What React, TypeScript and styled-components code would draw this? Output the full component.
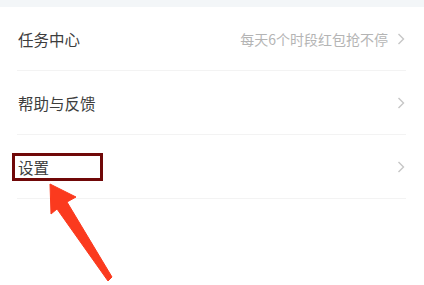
import React from 'react'
import styled, { createGlobalStyle } from 'styled-components'

const GlobalStyle = createGlobalStyle`
    html, body {
        margin: 0;
        padding: 0;
        background: #ffffff;
    }
    body {
        font-family: "Noto Sans CJK SC", "Noto Sans", sans-serif;
    }
`

const Page = styled.div`
    position: relative;
    width: 424px;
    height: 285px;
    overflow: hidden;
    background: #ffffff;
`

const TopBand = styled.div`
    height: 7px;
    background: #f3f6f8;
`

const List = styled.div`
    display: flex;
    flex-direction: column;
`

const Row = styled.div`
    position: relative;
    display: flex;
    align-items: center;
    height: 63px;
    margin: 0 18px 0 17px;
    padding-left: 1px;
    border-bottom: 1px solid #f3f3f3;
`

const Title = styled.span`
    flex: 1;
    font-size: 15.5px;
    color: #3d3d3d;
    padding-top: 1px;
`

const Hint = styled.span`
    font-size: 14px;
    color: #b4b4b4;
    margin-right: 9px;
    padding-top: 1px;
`

const Chevron = styled.svg`
    width: 8px;
    height: 12px;
    margin-right: 1px;
    margin-top: 1px;
`

const Highlight = styled.div`
    position: absolute;
    left: -5px;
    top: 18px;
    width: 85px;
    height: 22px;
    border: 3px solid #700808;
`

const Arrow = styled.svg`
    position: absolute;
    left: 0;
    top: 0;
    pointer-events: none;
`

type Item = { title: string; hint?: string; marked?: boolean }

const items: Item[] = [
    { title: '任务中心', hint: '每天6个时段红包抢不停' },
    { title: '帮助与反馈' },
    { title: '设置', marked: true },
]

function App() {
    return (
        <Page>
            <GlobalStyle />
            <TopBand />
            <List>
                {items.map((item) => (
                    <Row key={item.title}>
                        <Title>{item.title}</Title>
                        {item.hint && <Hint>{item.hint}</Hint>}
                        <Chevron viewBox="0 0 8 12">
                            <polyline
                                points="1.5,1 6.5,6 1.5,11"
                                fill="none"
                                stroke="#c6c6c6"
                                strokeWidth="1.4"
                            />
                        </Chevron>
                        {item.marked && <Highlight />}
                    </Row>
                ))}
            </List>
            <Arrow width="424" height="285" viewBox="0 0 424 285">
                <polygon
                    points="50,184 76,197 67,202 112,277 108,281 57,209 51,214"
                    fill="#fb3a1e"
                    strokeLinejoin="round"
                    stroke="#fb3a1e"
                    strokeWidth="1"
                />
            </Arrow>
        </Page>
    )
}

export default App
